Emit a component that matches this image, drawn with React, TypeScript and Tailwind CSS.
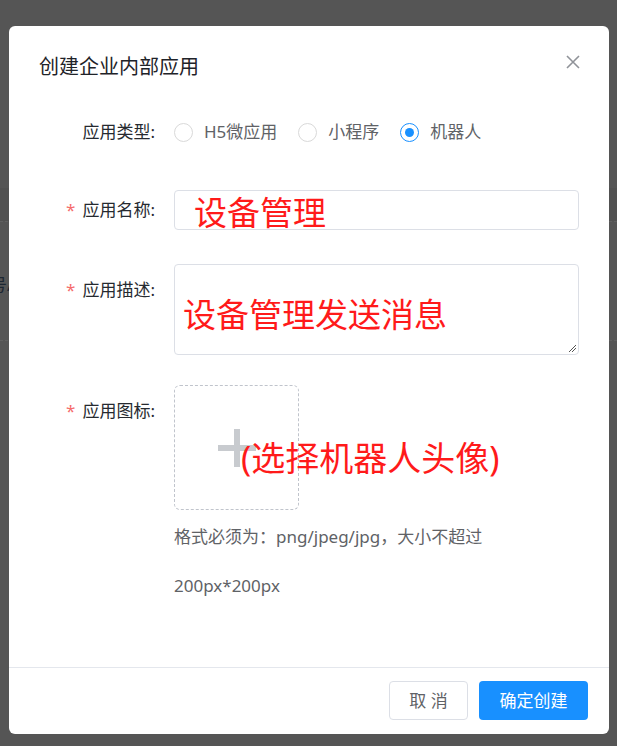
import React from "react";

const FONT = { fontFamily: '"Noto Sans", "Noto Sans CJK SC", sans-serif' };

function Label({ text, required }: { text: string; required?: boolean }) {
  return (
    <div className="w-[165px] shrink-0 pr-[19px] text-right text-[17px] leading-[20px] text-[#262a30]">
      {required && <span className="mr-[7px] text-[#f56c6c]">*</span>}
      {text}
    </div>
  );
}

function Radio({ label, checked }: { label: string; checked?: boolean }) {
  return (
    <div className="mr-[21px] flex items-center gap-[11px]">
      <span
        className={
          checked
            ? "flex h-[19px] w-[19px] items-center justify-center rounded-full border border-[#1890ff] bg-white"
            : "flex h-[19px] w-[19px] items-center justify-center rounded-full border border-[#d9d9d9] bg-white"
        }
      >
        {checked && <span className="h-[9px] w-[9px] rounded-full bg-[#1890ff]" />}
      </span>
      <span className="text-[17px] text-[#606266]">{label}</span>
    </div>
  );
}

export default function App() {
  return (
    <div className="relative h-[746px] w-[617px] overflow-hidden bg-[#555555]" style={FONT}>
      {/* page behind the mask */}
      <div className="absolute left-0 top-[188px] h-[33px] w-full bg-[#515151]" />
      <div className="absolute left-0 top-[221px] w-full border-t border-dashed border-[#616161]" />
      <div className="absolute left-0 top-[340px] w-full border-t border-dashed border-[#616161]" />
      <div className="absolute left-[-10px] top-[272px] text-[17px] text-[#1d2733]">号/</div>

      {/* dialog */}
      <div className="absolute left-[9px] top-[26px] flex h-[708px] w-[600px] flex-col rounded-[6px] bg-white">
        <div className="flex items-start justify-between pl-[30px] pr-[29px] pt-[29px]">
          <div className="text-[20px] leading-[24px] text-[#1f2329]">创建企业内部应用</div>
          <svg width="14" height="14" viewBox="0 0 14 14">
            <path d="M1 1 L13 13 M13 1 L1 13" stroke="#909399" strokeWidth="1.6" fill="none" />
          </svg>
        </div>

        {/* type */}
        <div className="mt-[33px] flex h-[40px] items-center">
          <Label text="应用类型:" />
          <div className="flex items-center">
            <Radio label="H5微应用" />
            <Radio label="小程序" />
            <Radio label="机器人" checked />
          </div>
        </div>

        {/* name */}
        <div className="mt-[38px] flex items-center">
          <Label text="应用名称:" required />
          <div className="relative h-[40px] w-[405px] rounded-[4px] border border-[#dcdfe6]">
            <span className="absolute left-[19px] top-[3px] whitespace-nowrap text-[33px] leading-[38px] text-[#ff1a1a]">
              设备管理
            </span>
          </div>
        </div>

        {/* description */}
        <div className="mt-[34px] flex items-start">
          <div className="pt-[16px]">
            <Label text="应用描述:" required />
          </div>
          <div className="relative h-[91px] w-[405px] rounded-[4px] border border-[#dcdfe6]">
            <span className="absolute left-[8px] top-[31px] whitespace-nowrap text-[33px] leading-[38px] text-[#ff1a1a]">
              设备管理发送消息
            </span>
            <svg width="9" height="9" viewBox="0 0 9 9" className="absolute bottom-[1px] right-[1px]">
              <path d="M8 1 L1 8 M8 4 L4 8" stroke="#555" strokeWidth="1" fill="none" />
            </svg>
          </div>
        </div>

        {/* icon */}
        <div className="mt-[30px] flex items-start">
          <div className="pt-[16px]">
            <Label text="应用图标:" required />
          </div>
          <div className="relative flex h-[125px] w-[125px] items-center justify-center rounded-[6px] border border-dashed border-[#c0c4cc]">
            <div className="relative h-[38px] w-[38px]">
              <div className="absolute left-0 top-[16px] h-[6px] w-[38px] bg-[#c8cbcf]" />
              <div className="absolute left-[16px] top-0 h-[38px] w-[6px] bg-[#c8cbcf]" />
            </div>
            <span className="absolute left-[66px] top-[52px] whitespace-nowrap text-[34px] leading-[40px] text-[#ff1a1a]">
              (选择机器人头像)
            </span>
          </div>
        </div>

        <div className="ml-[165px] mt-[2px] text-[17px] leading-[49px] text-[#606266]">
          格式必须为：png/jpeg/jpg，大小不超过
          <br />
          200px*200px
        </div>

        <div className="flex-1" />

        <div className="flex justify-end gap-[11px] border-t border-[#e4e7ed] pb-[14px] pr-[21px] pt-[13px]">
          <button className="flex h-[39px] w-[79px] items-center justify-center rounded-[4px] border border-[#dcdfe6] bg-white text-[17px] text-[#606266]">
            取 消
          </button>
          <button className="flex h-[39px] w-[109px] items-center justify-center rounded-[4px] bg-[#1890ff] text-[17px] text-white">
            确定创建
          </button>
        </div>
      </div>
    </div>
  );
}
